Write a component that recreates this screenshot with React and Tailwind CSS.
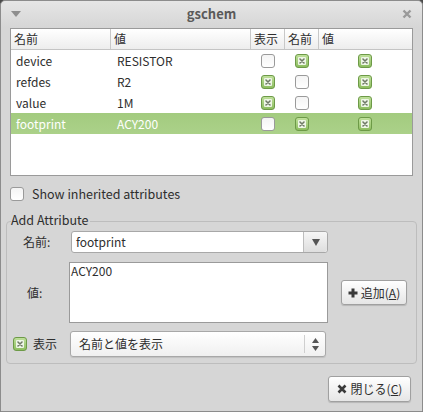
import React from 'react';

const font = { fontFamily: '"Noto Sans CJK JP", "Noto Sans", sans-serif' };

const Check = ({ on }) =>
  on ? (
    <span className="inline-flex w-[14px] h-[14px] items-center justify-center rounded-[3px] border border-[#6d9a47] bg-gradient-to-b from-[#bfe09b] to-[#8dbd5f]">
      <svg width="8" height="8" viewBox="0 0 8 8">
        <rect x="0" y="0" width="8" height="8" rx="1" fill="#eef6e6" />
        <path d="M2 2 L6 6 M6 2 L2 6" stroke="#6f7a66" strokeWidth="1.6" strokeLinecap="round" />
      </svg>
    </span>
  ) : (
    <span className="inline-block w-[14px] h-[14px] rounded-[3px] border border-[#9a9a9a] bg-gradient-to-b from-[#f4f4f4] to-white" />
  );

const rows = [
  { name: 'device', value: 'RESISTOR', vis: false, n: true, v: true },
  { name: 'refdes', value: 'R2', vis: true, n: false, v: true },
  { name: 'value', value: '1M', vis: true, n: false, v: true },
  { name: 'footprint', value: 'ACY200', vis: false, n: true, v: true, sel: true },
];

const cols = 'grid grid-cols-[100px_140px_34px_34px_1fr]';

export default function App() {
  return (
    <div style={font} className="w-[423px] h-[412px] bg-[#4a4a4a] text-[12px] text-[#2e2e2e]">
      <div className="w-[423px] h-[412px] flex flex-col rounded-t-[5px] border border-[#8c8c8c] bg-[#d6d6d6]">
        {/* title bar */}
        <div className="h-[26px] flex items-center justify-between px-[10px] rounded-t-[5px] bg-gradient-to-b from-[#e6e6e6] to-[#d6d6d6]">
          <svg width="10" height="6" viewBox="0 0 10 6"><path d="M0 0 H10 L5 6 Z" fill="#8e8e8e" /></svg>
          <span className="font-bold text-[#5a5a5a] text-[13px]">gschem</span>
          <svg width="10" height="10" viewBox="0 0 10 10"><path d="M1.5 1.5 L8.5 8.5 M8.5 1.5 L1.5 8.5" stroke="#9a9a9a" strokeWidth="2.4" /></svg>
        </div>

        {/* tree view */}
        <div className="mx-[9px] mt-[1px] h-[148px] border border-[#9a9a9a] bg-white">
          <div className={`${cols} h-[21px] border-b border-[#c4c4c4] bg-gradient-to-b from-white to-[#ededed]`}>
            {['名前', '値', '表示', '名前', '値'].map((h, i) => (
              <div key={i} className={`flex items-center px-[3px] whitespace-nowrap overflow-hidden ${i < 4 ? 'border-r border-[#c8c8c8]' : ''}`}>
                {h}
              </div>
            ))}
          </div>
          {rows.map((r) => (
            <div
              key={r.name}
              className={`${cols} h-[21px] items-center ${r.sel ? 'bg-gradient-to-b from-[#a3cb7f] to-[#abd189] text-white' : ''}`}
            >
              <div className="pl-[5px]">{r.name}</div>
              <div className="pl-[6px]">{r.value}</div>
              <div className="flex justify-center"><Check on={r.vis} /></div>
              <div className="flex justify-center"><Check on={r.n} /></div>
              <div className="flex justify-center pr-[2px]"><Check on={r.v} /></div>
            </div>
          ))}
        </div>

        {/* inherited */}
        <div className="flex items-center gap-[8px] mt-[11px] ml-[9px] h-[14px]">
          <Check on={false} />
          <span className="text-[12.5px]">Show inherited attributes</span>
        </div>

        {/* add attribute frame */}
        <div className="relative mt-[20px] mx-[5px] h-[143px] rounded-[4px] border border-[#bdbdbd]">
          <span className="absolute left-[4px] -top-[11px] bg-[#d6d6d6] leading-[18px] pr-[1px] text-[12.5px]">Add Attribute</span>
          <div className="flex items-center mt-[9px] h-[22px]">
            <span className="w-[64px] pl-[16px]">名前:</span>
            <div className="flex w-[257px] h-[22px] rounded-[3px] border border-[#a8a8a8] bg-white">
              <span className="flex-1 flex items-center pl-[4px]">footprint</span>
              <span className="w-[24px] flex items-center justify-center border-l border-[#bdbdbd] bg-gradient-to-b from-[#f6f6f6] to-[#dedede] rounded-r-[3px]">
                <svg width="8" height="7" viewBox="0 0 8 7"><path d="M0 0 H8 L4 7 Z" fill="#555" /></svg>
              </span>
            </div>
          </div>
          <div className="flex items-center mt-[9px] h-[61px]">
            <span className="w-[62px] pl-[20px]">値:</span>
            <div className="w-[259px] h-[61px] border border-[#9a9a9a] bg-white leading-[14px] pl-[1px] pt-[1px]">ACY200</div>
            <button className="ml-[13px] w-[66px] h-[25px] flex items-center justify-center gap-[3px] rounded-[3px] border border-[#a0a0a0] bg-gradient-to-b from-white to-[#e6e6e6] shadow-[0_1px_1px_rgba(0,0,0,0.15)] text-[12px]">
              <svg width="10" height="10" viewBox="0 0 10 10"><path d="M5 0.5 V9.5 M0.5 5 H9.5" stroke="#3a3a3a" strokeWidth="3" /></svg>
              <span>追加(<span className="underline">A</span>)</span>
            </button>
          </div>
          <div className="flex items-center mt-[8px] h-[26px]">
            <span className="ml-[6px] flex"><Check on={true} /></span>
            <span className="ml-[6px] w-[37px]">表示</span>
            <div className="flex w-[256px] h-[26px] rounded-[3px] border border-[#a8a8a8] bg-gradient-to-b from-white to-[#f0f0f0] shadow-[0_1px_1px_rgba(0,0,0,0.1)]">
              <span className="flex-1 flex items-center pl-[8px] border-r border-[#cfcfcf] my-[3px]">名前と値を表示</span>
              <span className="w-[20px] flex flex-col items-center justify-center gap-[3px]">
                <svg width="7" height="5" viewBox="0 0 7 5"><path d="M0 5 H7 L3.5 0 Z" fill="#555" /></svg>
                <svg width="7" height="5" viewBox="0 0 7 5"><path d="M0 0 H7 L3.5 5 Z" fill="#555" /></svg>
              </span>
            </div>
          </div>
        </div>

        {/* footer */}
        <div className="flex justify-end mt-[12px] mr-[11px]">
          <button className="w-[83px] h-[26px] flex items-center justify-center gap-[4px] rounded-[3px] border border-[#a0a0a0] bg-gradient-to-b from-white to-[#e6e6e6] shadow-[0_1px_1px_rgba(0,0,0,0.15)] text-[12px]">
            <svg width="10" height="10" viewBox="0 0 10 10"><path d="M1.5 1.5 L8.5 8.5 M8.5 1.5 L1.5 8.5" stroke="#3a3a3a" strokeWidth="2.6" /></svg>
            <span>閉じる(<span className="underline">C</span>)</span>
          </button>
        </div>
      </div>
    </div>
  );
}
